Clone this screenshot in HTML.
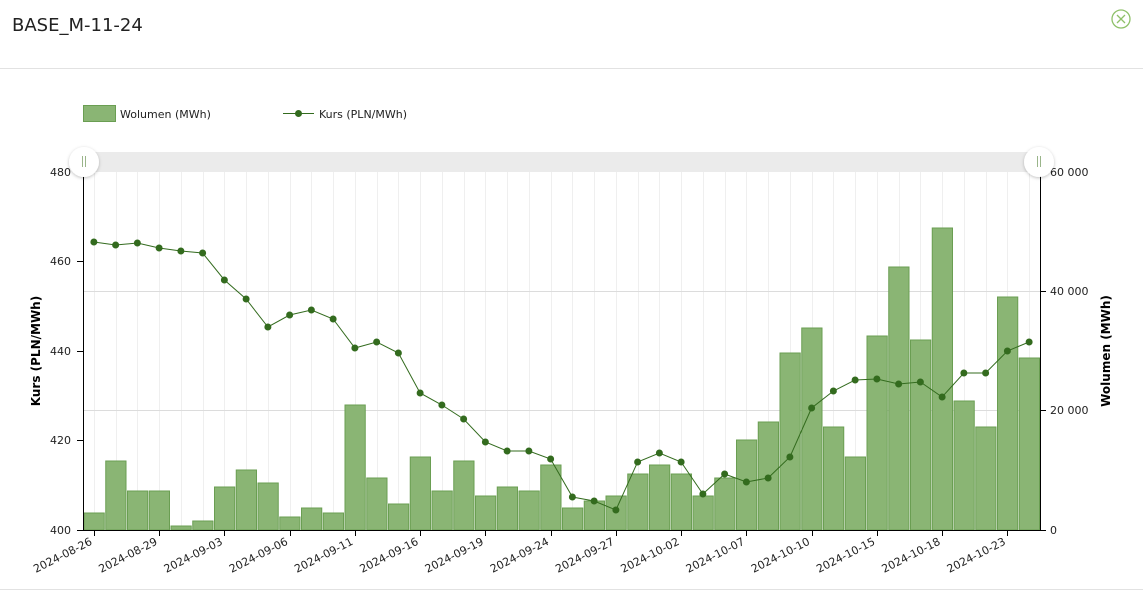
<!DOCTYPE html>
<html><head><meta charset="utf-8"><style>
html,body{margin:0;padding:0;background:#fff;width:1143px;height:601px;overflow:hidden;font-family:"Liberation Sans","DejaVu Sans",sans-serif}
</style></head><body>
<svg width="1143" height="601" viewBox="0 0 1143 601" xmlns="http://www.w3.org/2000/svg" font-family="DejaVu Sans, Liberation Sans, sans-serif">
<defs><filter id="sh" x="-50%" y="-50%" width="200%" height="200%"><feDropShadow dx="0" dy="1" stdDeviation="1.5" flood-color="#000" flood-opacity="0.25"/></filter></defs>
<text x="12" y="31" font-family="DejaVu Sans, sans-serif" font-size="18" fill="#222">BASE_M-11-24</text>
<circle cx="1121" cy="19" r="9" fill="none" stroke="#8fc16a" stroke-width="1.3"/>
<path d="M1117 15 L1125 23 M1125 15 L1117 23" stroke="#8fc16a" stroke-width="1.3"/>
<line x1="0" y1="68.5" x2="1143" y2="68.5" stroke="#e2e2e2"/>
<line x1="0" y1="589.5" x2="1143" y2="589.5" stroke="#e2e2e2"/>
<rect x="83.5" y="105.5" width="32" height="16" fill="#8ab574" stroke="#6a9e52"/>
<text x="120" y="118" font-size="11" fill="#222">Wolumen (MWh)</text>
<line x1="283" y1="113.5" x2="314" y2="113.5" stroke="#336b1e"/>
<circle cx="298.5" cy="113.5" r="3.5" fill="#336b1e"/>
<text x="319" y="118" font-size="11" fill="#222">Kurs (PLN/MWh)</text>
<rect x="83" y="152" width="957" height="20" fill="#ebebeb"/>
<g id="grid" stroke="#efefef"></g>
<line x1="83" y1="291.5" x2="1040" y2="291.5" stroke="#dcdcdc"/>
<line x1="83" y1="410.5" x2="1040" y2="410.5" stroke="#dcdcdc"/>
<g id="bars" fill="#8ab574" stroke="#6a9e52" stroke-width="1"></g>
<polyline id="line" fill="none" stroke="#336b1e" stroke-width="1"/>
<g id="pts" fill="#336b1e"></g>
<line x1="83.5" y1="172" x2="83.5" y2="530" stroke="#000"/>
<line x1="1040.5" y1="172" x2="1040.5" y2="530" stroke="#000"/>
<line x1="77" y1="530.5" x2="1046" y2="530.5" stroke="#000"/>
<g font-size="11" fill="#222" text-anchor="end">
<text x="71" y="176">480</text><text x="71" y="265">460</text><text x="71" y="355">440</text><text x="71" y="444">420</text><text x="71" y="534">400</text>
</g>
<g stroke="#000"><line x1="77" y1="172.5" x2="83" y2="172.5"/><line x1="77" y1="261.5" x2="83" y2="261.5"/><line x1="77" y1="351.5" x2="83" y2="351.5"/><line x1="77" y1="440.5" x2="83" y2="440.5"/>
<line x1="1040" y1="172.5" x2="1046" y2="172.5"/><line x1="1040" y1="291.5" x2="1046" y2="291.5"/><line x1="1040" y1="410.5" x2="1046" y2="410.5"/></g>
<g font-size="11" fill="#222">
<text x="1050" y="176">60 000</text><text x="1050" y="295">40 000</text><text x="1050" y="414">20 000</text><text x="1050" y="534">0</text>
</g>
<text transform="translate(40,351) rotate(-90)" font-size="12" font-weight="bold" text-anchor="middle" fill="#000">Kurs (PLN/MWh)</text>
<text transform="translate(1110,351) rotate(-90)" font-size="12" font-weight="bold" text-anchor="middle" fill="#000">Wolumen (MWh)</text>
<g id="xl" font-size="11" fill="#222" text-anchor="end"></g>
<g id="xt" stroke="#000"></g>
<circle cx="84" cy="162" r="15" fill="#fff" filter="url(#sh)"/>
<path d="M82.5 156 V167 M85.5 156 V167" stroke="#9ab58a"/>
<circle cx="1039" cy="162" r="15" fill="#fff" filter="url(#sh)"/>
<path d="M1037.5 156 V167 M1040.5 156 V167" stroke="#9ab58a"/>
</svg>
<script>
var ns="http://www.w3.org/2000/svg";
var tops=[513,461,491,491,526,521,487,470,483,517,508,513,405,478,504,457,491,461,496,487,491,465,508,501,496,474,465,474,496,478,440,422,353,328,427,457,336,267,340,228,401,427,297,358];
var ly=[242,245,243,248,251,253,280,299,327,315,310,319,348,342,353,393,405,419,442,451,451,459,497,501,510,462,453,462,494,474,482,478,457,408,391,380,379,384,382,397,373,373,351,342];
var step=957/44,pts=[];
var labels=["2024-08-26","2024-08-29","2024-09-03","2024-09-06","2024-09-11","2024-09-16","2024-09-19","2024-09-24","2024-09-27","2024-10-02","2024-10-07","2024-10-10","2024-10-15","2024-10-18","2024-10-23"];
function el(t,a,p){var e=document.createElementNS(ns,t);for(var k in a)e.setAttribute(k,a[k]);document.getElementById(p).appendChild(e);return e;}
for(var i=0;i<44;i++){
 var x0=83+step*i,cx=x0+step/2;
 el("line",{x1:Math.round(cx)+.5,y1:172,x2:Math.round(cx)+.5,y2:530},"grid");
 el("rect",{x:x0+1,y:tops[i],width:step-1.5,height:530-tops[i]},"bars");
 pts.push(cx.toFixed(1)+","+ly[i]);
 el("circle",{cx:cx,cy:ly[i],r:3.5},"pts");
 if(i%3==0){var j=i/3;el("line",{x1:Math.round(cx)+.5,y1:530,x2:Math.round(cx)+.5,y2:536},"xt");
  var t=el("text",{transform:"translate("+(cx-1)+",544) rotate(-27)"},"xl");t.textContent=labels[j];}
}
document.getElementById("line").setAttribute("points",pts.join(" "));
</script>
</body></html>
